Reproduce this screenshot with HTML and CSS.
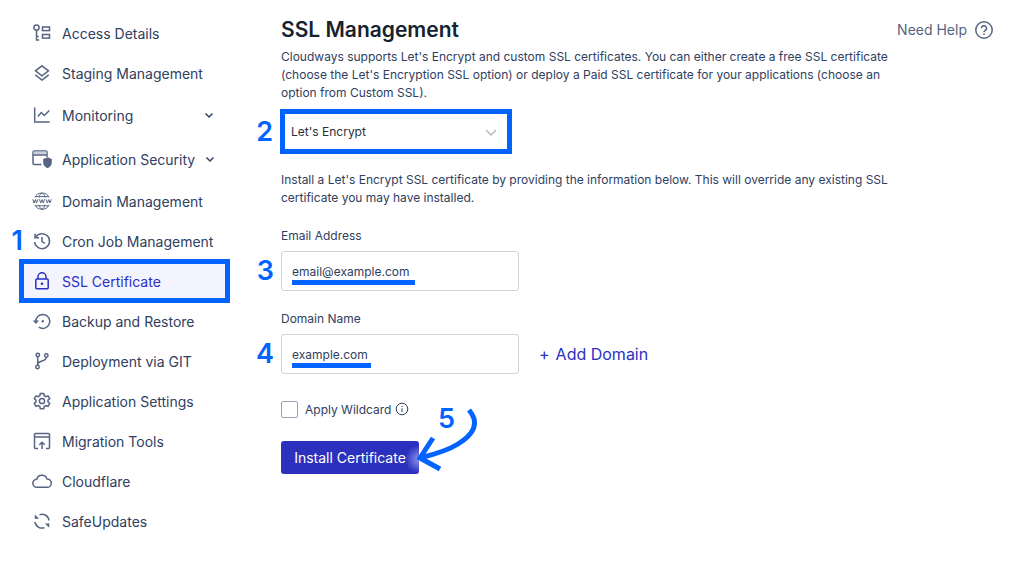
FILE: index.html
```html
<!DOCTYPE html>
<html lang="en">
<head>
    <meta charset="UTF-8">
    <meta name="viewport" content="width=device-width, initial-scale=1.0">
    <title>SSL Management</title>
    <link rel="stylesheet" href="styles.css">
</head>
<body>
    <div class="layout">
        <nav class="sidebar">
            <a href="#">
                <svg class="icon" viewBox="0 0 20 20"><circle cx="4.5" cy="4.5" r="2.6"/><path d="M4.500 7.100v9.900h2.700M4.500 13.500h2.200"/><rect x="10.500" y="4" width="7" height="3.600"/><rect x="10.500" y="11.500" width="7" height="3.600"/></svg>
                <span>Access Details</span>
            </a>
            <a href="#">
                <svg class="icon" viewBox="0 0 20 20"><path d="M10 2.800l6.500 5-6.500 5-6.500-5zM3.300 11.800l6.700 5.200 6.700-5.200"/></svg>
                <span>Staging Management</span>
            </a>
            <a href="#" class="expandable">
                <svg class="icon" viewBox="0 0 20 20"><path d="M2.700 2.500v14.500h15M5.800 11.500l3.500-4 3 3 5-5"/></svg>
                <span>Monitoring</span>
                <svg class="chevron" viewBox="0 0 10 10"><path d="M1.500 3.500l3.500 3.500 3.500-3.500"/></svg>
            </a>
            <a href="#" class="expandable">
                <svg class="icon" viewBox="0 0 20 20"><path d="M9.500 15.500H2.200a1.200 1.200 0 0 1-1.200-1.200V3.200A1.200 1.200 0 0 1 2.200 2h11.600A1.200 1.200 0 0 1 15 3.200V8"/><path class="soft" d="M1.500 2.500h13v3h-13z"/><path d="M1 6h14"/><path class="solid" d="M15.500 8.300l4.300 1.700v3.500c0 2.700-1.800 4.800-4.300 5.800-2.500-1-4.300-3.100-4.300-5.800V10z"/></svg>
                <span>Application Security</span>
                <svg class="chevron" viewBox="0 0 10 10"><path d="M1.500 3.500l3.500 3.500 3.500-3.500"/></svg>
            </a>
            <a href="#">
                <svg class="icon" viewBox="0 0 20 20"><g class="thin"><path d="M2.800 6.500a8 8 0 0 1 14.400 0M2.800 13.800a8 8 0 0 0 14.400 0M7 6.500c.6-2.500 1.700-4.200 3-4.200s2.400 1.700 3 4.200M7 13.800c.6 2.500 1.700 4.200 3 4.200s2.400-1.700 3-4.200M3.500 5.600h13M3.500 14.800h13"/><path d="M.8 8.300l1.200 3.700 1.300-3.400 1.300 3.400 1.200-3.700M7.500 8.300l1.200 3.700 1.300-3.400 1.300 3.400 1.200-3.700M14.200 8.300l1.200 3.700 1.300-3.400 1.300 3.400 1.200-3.700"/></g></svg>
                <span>Domain Management</span>
            </a>
            <a href="#">
                <svg class="icon" viewBox="0 0 20 20"><path d="M3.500 6.500a7.500 7.500 0 1 1-.9 4.500M3 2.800v4h4M10 6v4.500l3 2"/></svg>
                <span>Cron Job Management</span>
                <b class="step step-nav">1</b>
            </a>
            <a href="#" class="active" aria-current="page">
                <svg class="icon" viewBox="0 0 20 20"><rect x="3.800" y="8" width="12.400" height="9.800" rx="1"/><path d="M6 8V5.800a4 4 0 0 1 8 0V8"/><circle class="solid" cx="10" cy="12.800" r="1.300"/></svg>
                <span>SSL Certificate</span>
            </a>
            <a href="#">
                <svg class="icon" viewBox="0 0 20 20"><path d="M3.800 11a7 7 0 1 1 3 5.200"/><path class="solid" d="M.8 9.600h6.200L3.900 13z"/><circle class="solid" cx="10.800" cy="10.300" r="1.200"/></svg>
                <span>Backup and Restore</span>
            </a>
            <a href="#">
                <svg class="icon" viewBox="0 0 20 20"><circle cx="5.800" cy="4" r="1.700"/><circle cx="14.300" cy="4.500" r="1.700"/><circle cx="5.500" cy="16" r="1.700"/><path d="M5.700 5.700v8.600M14.200 6.200c0 5-7.800 2.500-8.500 7"/></svg>
                <span>Deployment via GIT</span>
            </a>
            <a href="#">
                <svg class="icon" viewBox="0 0 20 20"><path d="M8.300 2.500h3.400l.5 2.200 1.600.9 2.200-.8 1.700 2.900-1.700 1.500v1.700l1.700 1.500-1.700 2.900-2.200-.7-1.600.9-.5 2.200H8.300l-.5-2.200-1.600-.9-2.200.7-1.700-2.900L4 10.900V9.200L2.300 7.700 4 4.800l2.200.8 1.600-.9z"/><circle cx="10" cy="10" r="2.600"/></svg>
                <span>Application Settings</span>
            </a>
            <a href="#">
                <svg class="icon" viewBox="0 0 20 20"><path d="M6 17.500H3.500a1 1 0 0 1-1-1v-13a1 1 0 0 1 1-1h13a1 1 0 0 1 1 1v13a1 1 0 0 1-1 1H14M2.500 6h15M10 18v-6.500M7.300 13.800L10 11.200l2.700 2.600"/></svg>
                <span>Migration Tools</span>
            </a>
            <a href="#">
                <svg class="icon" viewBox="0 0 20 20"><path d="M5 16.300a4 4 0 0 1-.3-8A5.400 5.400 0 0 1 15 7.900a4.200 4.200 0 0 1 .2 8.400z"/></svg>
                <span>Cloudflare</span>
            </a>
            <a href="#">
                <svg class="icon" viewBox="0 0 20 20"><path d="M7.500 3.700A7 7 0 0 1 17 9.500M12.500 16.600A7 7 0 0 1 3 10.800M3.200 7.500A7 7 0 0 1 4.500 5.600M16.800 12.800a7 7 0 0 1-1.300 1.900"/><path class="solid" d="M2.800 3.500v4.300h4.300zM17.200 16.800v-4.300h-4.300z"/></svg>
                <span>SafeUpdates</span>
            </a>
        </nav>

        <main class="content">
            <header class="page-header">
                <h1>SSL Management</h1>
                <a href="#" class="help">Need Help
                    <svg class="icon" viewBox="0 0 20 20"><circle cx="10" cy="10" r="8.200"/><path d="M7.500 8.200a2.500 2.500 0 1 1 3.700 2.200c-.8.500-1.200.9-1.200 1.900M10 13.600v1.500"/></svg>
                </a>
            </header>
            <p class="intro">Cloudways supports Let's Encrypt and custom SSL certificates. You can either create a free SSL certificate (choose the Let's Encryption SSL option) or deploy a Paid SSL certificate for your applications (choose an option from Custom SSL).</p>

            <div class="provider">
                <b class="step">2</b>
                <select aria-label="SSL provider">
                    <option>Let's Encrypt</option>
                    <option>Custom SSL</option>
                </select>
                <svg class="chevron" viewBox="0 0 10 10"><path d="M0 3l5 5 5-5"/></svg>
            </div>

            <p class="note">Install a Let's Encrypt SSL certificate by providing the information below. This will override any existing SSL certificate you may have installed.</p>

            <form>
                <div class="field">
                    <label for="email">Email Address</label>
                    <div class="control">
                        <b class="step">3</b>
                        <input type="text" id="email" value="email@example.com">
                        <span class="underline underline-email"></span>
                    </div>
                </div>

                <div class="field">
                    <label for="domain">Domain Name</label>
                    <div class="field-row">
                        <div class="control">
                            <b class="step">4</b>
                            <input type="text" id="domain" value="example.com">
                            <span class="underline underline-domain"></span>
                        </div>
                        <button type="button" class="add-domain"><span>+</span>Add Domain</button>
                    </div>
                </div>

                <div class="wildcard">
                    <input type="checkbox" id="wildcard">
                    <label for="wildcard">Apply Wildcard</label>
                    <svg class="info" viewBox="0 0 14 14"><circle cx="7" cy="7" r="5.800"/><path d="M7 6.300v3.700M7 3.800v1.200"/></svg>
                </div>

                <div class="submit">
                    <button type="submit" class="install">Install Certificate</button>
                    <b class="step step-submit">5</b>
                    <svg class="arrow" viewBox="0 0 66 70"><path d="M55 7C66 20 60 31 44 41C33 48 18 52 6 55M19 35L6 55L26 66"/></svg>
                </div>
            </form>
        </main>
    </div>
</body>
</html>
```

FILE: styles.css
```css
* {
    box-sizing: border-box;
}
body {
    margin: 0;
    font-family: Inter, "Open Sans", sans-serif;
    font-size: 12px;
    color: #2f4060;
    background-color: #fff;
}
a {
    color: inherit;
    text-decoration: none;
}
input, select, button {
    font: inherit;
    color: inherit;
}
svg {
    flex-shrink: 0;
    fill: none;
    stroke: currentColor;
    stroke-width: 1.5;
}
.layout {
    display: flex;
    align-items: flex-start;
}

/* Sidebar */
.sidebar {
    width: 249px;
    flex-shrink: 0;
    padding: 13px 21px;
}
.sidebar a {
    position: relative;
    display: flex;
    align-items: center;
    gap: 10px;
    height: 40px;
    padding: 0 14px 0 11px;
    font-size: 14px;
    white-space: nowrap;
}
.sidebar a.expandable {
    height: 44px;
}
.sidebar a.active {
    color: #2c2fc4;
    background-color: #f4f4fe;
    outline: 5px solid #0263ff;
    outline-offset: -3px;
}
.icon {
    width: 20px;
    height: 20px;
    color: #566583;
}
.active .icon {
    color: #2c2fc4;
}
.icon .solid {
    fill: currentColor;
    stroke: none;
}
.icon .soft {
    fill: #c9d0dc;
    stroke: none;
}
.icon .thin {
    stroke-width: 1;
}
.chevron {
    width: 10px;
    height: 10px;
    margin-left: auto;
}

/* Content */
.content {
    flex: 1;
    padding: 14px 30px 40px 32px;
}
.page-header {
    display: flex;
    justify-content: space-between;
    align-items: center;
}
h1 {
    margin: 0;
    font-size: 21px;
    line-height: 31px;
    font-weight: 600;
    color: #17222f;
}
.help {
    display: flex;
    align-items: center;
    gap: 7px;
    font-size: 14px;
    color: #566583;
}
.intro, .note {
    max-width: 620px;
    margin: 3px 0 7px;
    line-height: 18px;
}
.note {
    margin: 17px 0 19px;
}
.provider {
    position: relative;
    width: 232px;
    margin-left: -1px;
    color: #2b2f38;
}
.provider select {
    display: block;
    width: 100%;
    height: 45px;
    padding: 0 6px;
    border: 5px solid #0263ff;
    background-color: #fff;
    appearance: none;
}
.provider .chevron {
    position: absolute;
    right: 16px;
    top: 18px;
    color: #b5b9c0;
    pointer-events: none;
}
.field {
    margin-bottom: 18px;
    line-height: 20px;
}
.field label {
    display: block;
    margin-bottom: 5px;
}
.field-row {
    display: flex;
    align-items: center;
    gap: 20px;
}
.control {
    position: relative;
    width: 238px;
}
.control input {
    display: block;
    width: 100%;
    height: 40px;
    padding: 0 10px;
    border: 1px solid #cdd2dc;
    border-radius: 3px;
}
.add-domain {
    display: flex;
    gap: 6px;
    padding: 0;
    border: none;
    background: none;
    font-size: 16px;
    color: #2c2fc4;
}
.wildcard {
    display: flex;
    align-items: center;
    height: 20px;
    margin-top: 25px;
}
.wildcard input {
    width: 17px;
    height: 17px;
    margin: 0 7px 0 0;
    border: 1px solid #98a3b5;
    border-radius: 2px;
    appearance: none;
}
.info {
    width: 14px;
    height: 14px;
    margin-left: 4px;
    stroke-width: 1;
}
.submit {
    position: relative;
    margin-top: 22px;
}
.install {
    width: 138px;
    height: 33px;
    padding: 0;
    border: none;
    border-radius: 3px;
    font-size: 14px;
    color: #fff;
    background: radial-gradient(circle at 100% 55%, #8f93ec 0, #2b31bd 14px);
}

/* Walkthrough marks */
.step {
    position: absolute;
    right: 100%;
    top: 50%;
    margin-right: 7px;
    font-size: 27px;
    line-height: 28px;
    font-weight: 600;
    color: #0263ff;
    transform: translateY(-50%);
}
.step-nav {
    margin-right: -2px;
}
.step-submit {
    top: -22px;
    left: 157px;
    right: auto;
}
.underline {
    position: absolute;
    left: 11px;
    bottom: 6px;
    height: 5px;
    background-color: #0263ff;
}
.underline-email {
    width: 123px;
}
.underline-domain {
    width: 79px;
}
.arrow {
    position: absolute;
    left: 133px;
    top: -38px;
    width: 66px;
    height: 70px;
    color: #0263ff;
    stroke-width: 5;
}
```
